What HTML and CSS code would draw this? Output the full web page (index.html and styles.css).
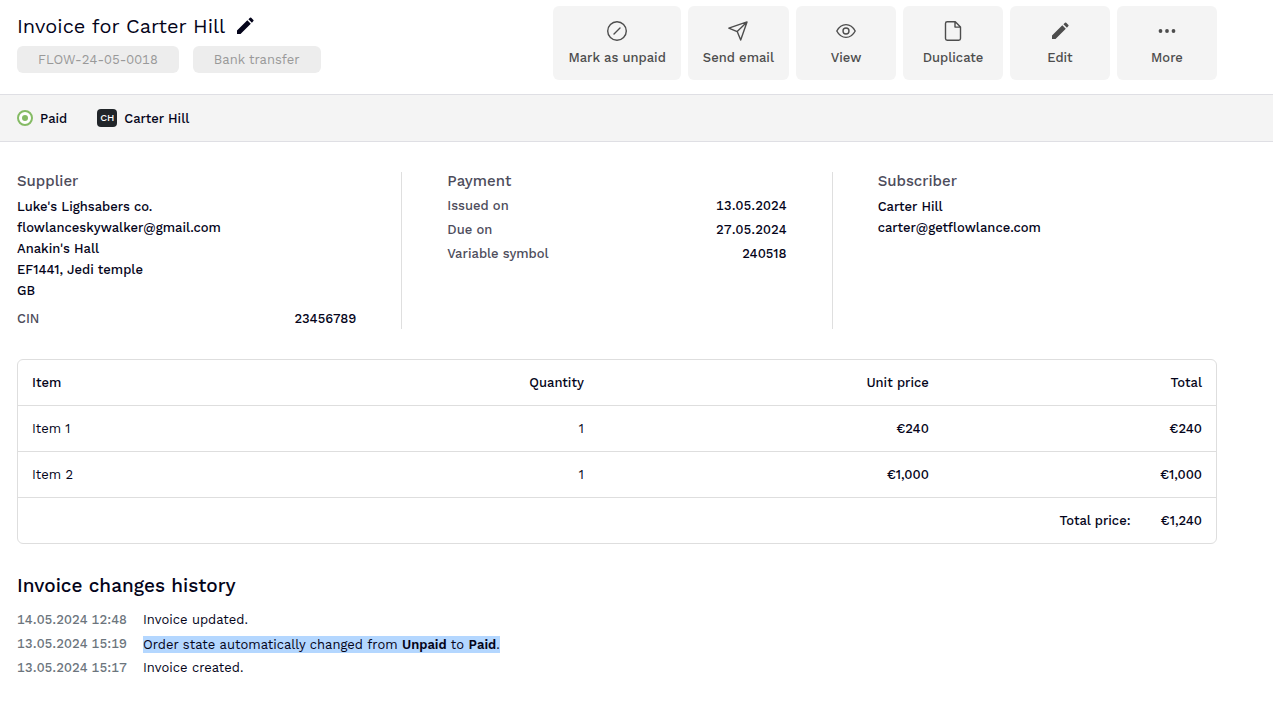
FILE: index.html
```html
<!DOCTYPE html>
<html lang="en">
<head>
<meta charset="utf-8">
<title>Invoice for Carter Hill</title>
<link rel="stylesheet" href="styles.css">
</head>
<body>
<header class="header">
  <div class="heading">
    <div class="title-row">
      <h1 class="title">Invoice for Carter Hill</h1>
      <button class="icon-button" type="button" aria-label="Rename invoice">
        <svg class="icon" viewBox="0 0 20 20" fill="currentColor" aria-hidden="true"><path d="M2 18v-3.500L12.300 4.300l3.500 3.500L5.500 18zM13.400 3.200l1.600-1.500q.6-.5 1.200 0l2.200 2.200q.5.600 0 1.200l-1.500 1.600z"/></svg>
      </button>
    </div>
    <div class="tags">
      <span class="tag tabular">FLOW-24-05-0018</span>
      <span class="tag">Bank transfer</span>
    </div>
  </div>
  <div class="actions">
    <button class="action" type="button">
      <svg class="icon line" viewBox="0 0 20 20" aria-hidden="true"><circle cx="10" cy="10" r="9.300"/><path d="M7 13l6-6"/></svg>
      Mark as unpaid
    </button>
    <button class="action" type="button">
      <svg class="icon line" viewBox="0 0 20 20" aria-hidden="true"><path d="M.8 7.200L19 .9l-6.300 18.200-3.500-8.500zM9.200 10.600L19 .9"/></svg>
      Send email
    </button>
    <button class="action" type="button">
      <svg class="icon line" viewBox="0 0 20 20" aria-hidden="true"><path d="M.8 10C3 5.800 6.300 3.600 10 3.600s7 2.200 9.200 6.400c-2.200 4.200-5.500 6.400-9.200 6.400S3 14.200.8 10z"/><circle cx="10" cy="10" r="3"/></svg>
      View
    </button>
    <button class="action" type="button">
      <svg class="icon line" viewBox="0 0 20 20" aria-hidden="true"><path d="M12.300.7H4.200q-1.700 0-1.700 1.700v15.200q0 1.700 1.700 1.700h11.600q1.700 0 1.700-1.700V5.900zM12 .9v5.200h5.300"/></svg>
      Duplicate
    </button>
    <button class="action" type="button">
      <svg class="icon" viewBox="0 0 20 20" fill="currentColor" aria-hidden="true"><path d="M2 18v-3.500L12.300 4.300l3.500 3.500L5.500 18zM13.400 3.200l1.600-1.500q.6-.5 1.200 0l2.200 2.200q.5.600 0 1.200l-1.500 1.600z"/></svg>
      Edit
    </button>
    <button class="action" type="button">
      <svg class="icon" viewBox="0 0 20 20" fill="currentColor" aria-hidden="true"><circle cx="3.500" cy="10" r="1.900"/><circle cx="10" cy="10" r="1.900"/><circle cx="16.500" cy="10" r="1.900"/></svg>
      More
    </button>
  </div>
</header>

<div class="status-bar">
  <span class="status">
    <svg class="status-icon" viewBox="0 0 16 16" aria-hidden="true"><circle cx="8" cy="8" r="7" fill="#fff" stroke="#85bb65" stroke-width="2"/><circle cx="8" cy="8" r="3" fill="#85bb65"/></svg>
    Paid
  </span>
  <span class="status"><span class="avatar">CH</span>Carter Hill</span>
</div>

<main class="content">
  <div class="parties">
    <section>
      <h2 class="subhead">Supplier</h2>
      <p class="line-text">Luke's Lighsabers co.</p>
      <p class="line-text">flowlanceskywalker@gmail.com</p>
      <p class="line-text">Anakin's Hall</p>
      <p class="line-text">EF1441, Jedi temple</p>
      <p class="line-text">GB</p>
      <dl class="facts facts-spaced">
        <div class="fact"><dt>CIN</dt><dd>23456789</dd></div>
      </dl>
    </section>
    <div class="divider"></div>
    <section>
      <h2 class="subhead">Payment</h2>
      <dl class="facts">
        <div class="fact"><dt>Issued on</dt><dd class="tabular">13.05.2024</dd></div>
        <div class="fact"><dt>Due on</dt><dd class="tabular">27.05.2024</dd></div>
        <div class="fact"><dt>Variable symbol</dt><dd>240518</dd></div>
      </dl>
    </section>
    <div class="divider"></div>
    <section>
      <h2 class="subhead">Subscriber</h2>
      <p class="line-text">Carter Hill</p>
      <p class="line-text">carter@getflowlance.com</p>
    </section>
  </div>

  <table class="items">
    <thead>
      <tr><th class="col-item">Item</th><th class="col-quantity">Quantity</th><th class="col-price">Unit price</th><th>Total</th></tr>
    </thead>
    <tbody>
      <tr><td>Item 1</td><td>1</td><td class="money">€240</td><td class="money">€240</td></tr>
      <tr><td>Item 2</td><td>1</td><td class="money">€1,000</td><td class="money">€1,000</td></tr>
    </tbody>
    <tfoot>
      <tr><td class="sum" colspan="4"><span>Total price:</span><span class="sum-value">€1,240</span></td></tr>
    </tfoot>
  </table>

  <section>
    <h2 class="history-title">Invoice changes history</h2>
    <ul class="history">
      <li class="event"><time class="when tabular">14.05.2024 12:48</time><span>Invoice updated.</span></li>
      <li class="event"><time class="when tabular">13.05.2024 15:19</time><span class="selected">Order state automatically changed from <b>Unpaid</b> to <b>Paid</b>.</span></li>
      <li class="event"><time class="when tabular">13.05.2024 15:17</time><span>Invoice created.</span></li>
    </ul>
  </section>
</main>
</body>
</html>
```
FILE: styles.css
```css
* { box-sizing: border-box; }
body, h1, h2, p, dl, dd, ul { margin: 0; padding: 0; }
body {
  background: #fff;
  color: #04041a;
  font: 400 13px/24px "Work Sans", Inter, sans-serif;
}
button { border: 0; font: inherit; cursor: pointer; }
.icon { width: 20px; height: 20px; flex: none; }
.line { fill: none; stroke: currentColor; stroke-width: 1.4; stroke-linejoin: round; stroke-linecap: round; }
.tabular { font-variant-numeric: tabular-nums; }

.header {
  display: flex;
  justify-content: space-between;
  align-items: flex-start;
  padding: 6px 56px 14px 17px;
}
.title-row { display: flex; align-items: center; gap: 10px; height: 40px; }
.title { font-size: 20px; line-height: 40px; font-weight: 400; }
.icon-button { display: flex; padding: 0; background: none; color: #04041a; }
.tags { display: flex; gap: 14px; }
.tag {
  padding: 0 21px;
  border-radius: 6px;
  background: #ededed;
  color: #999;
  line-height: 27px;
}
.actions { display: flex; gap: 7px; }
.action {
  display: flex;
  flex-direction: column;
  align-items: center;
  gap: 5px;
  min-width: 100px;
  height: 74px;
  padding: 15px 15px 0;
  border-radius: 6px;
  background: #f4f4f4;
  color: #4d4d4d;
  font-weight: 500;
}

.status-bar {
  display: flex;
  align-items: center;
  gap: 30px;
  height: 48px;
  padding: 0 17px;
  border: solid #dfdfe4;
  border-width: 1px 0;
  background: #f4f4f4;
  font-weight: 500;
  line-height: 25px;
}
.status { display: flex; align-items: center; gap: 7px; }
.status-icon { width: 16px; height: 16px; }
.avatar {
  width: 20px;
  border-radius: 4px;
  background: #212529;
  color: #fff;
  font-size: 10px;
  line-height: 18px;
  text-align: center;
}

.content { padding: 30px 56px 30px 17px; }
.parties { display: grid; grid-template-columns: 1fr 1px 1fr 1px 1fr; gap: 45px; }
.divider { background: #dfdfdf; }
.subhead { color: #4d4c5b; font-size: 15px; line-height: 18px; font-weight: 500; margin-bottom: 6px; }
.line-text { line-height: 21px; font-weight: 500; }
.facts { display: grid; gap: 4px; line-height: 20px; }
.fact { display: flex; justify-content: space-between; font-weight: 500; }
.fact dt { color: #4d4c5b; }
.facts-spaced { margin-top: 8px; }

.items {
  width: 100%;
  margin-top: 30px;
  border: 1px solid #dedede;
  border-radius: 6px;
  border-spacing: 0;
  table-layout: fixed;
}
.items th, .items td { height: 46px; padding: 0 14px; text-align: right; }
.items th { height: 45px; font-weight: 500; }
.items td { border-top: 1px solid #dedede; }
.items th:first-child, .items td:first-child { text-align: left; }
.items .col-item { width: 25%; }
.items .col-quantity { width: 23.4%; }
.items .col-price { width: 28.8%; }
.items .money { font-weight: 500; }
.items td.sum:first-child { text-align: right; font-weight: 500; }
.sum-value { margin-left: 30px; }

.history-title { margin: 28px 0 8px; font-size: 19px; line-height: 28px; font-weight: 500; }
.history { list-style: none; }
.event { display: flex; align-items: center; gap: 14px; height: 24px; }
.when { min-width: 112px; color: #6c757d; font-weight: 500; }
.selected { background: #b4d7ff; line-height: 17px; }
.selected b { font-weight: 600; }
```
